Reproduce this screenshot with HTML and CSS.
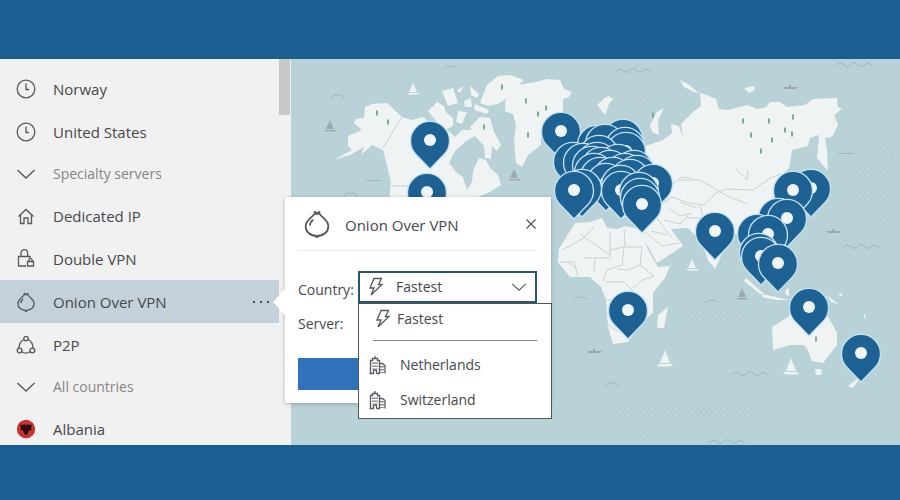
FILE: index.html
```
<!DOCTYPE html>
<html lang="en">
<head>
  <meta charset="UTF-8">
  <meta name="viewport" content="width=device-width, initial-scale=1.0">
  <title>Onion Over VPN</title>
  <link rel="stylesheet" href="styles.css">
</head>
<body>
  <!-- Shared icons -->
  <svg class="sprite" aria-hidden="true">
    <symbol id="i-clock" viewBox="0 0 20 20"><circle cx="10" cy="10" r="8.800"/><path d="M10 4.500V10.500H13"/></symbol>
    <symbol id="i-chevron" viewBox="0 0 20 20"><path d="M1.500 6L10 14L18.500 6"/></symbol>
    <symbol id="i-home" viewBox="0 0 20 20"><path d="M2.500 10.500L10 3.500L17.500 10.500M4.500 9V17.500H8V12H12V17.500H15.500V9"/></symbol>
    <symbol id="i-locks" viewBox="0 0 20 20"><path d="M10 17H2.500V7.500H14V10M5 7.500V4A3.300 3.300 0 0 1 11.600 4V7.500M11.500 12.500H17.500V17H11.500ZM12.800 12.500V11.300A1.700 1.700 0 0 1 16.200 11.300V12.500"/></symbol>
    <symbol id="i-onion" viewBox="0 0 26 26"><path d="M10 1.500L13 3L16 1.500M10.500 3.500H15.500M10.500 3.500C9 7 2.500 9 2.500 15C2.500 20.500 7 24 13 24C19 24 23.500 20.500 23.500 15C23.500 9 17 7 15.500 3.500M6.500 14.500C6.500 12 8 10 9.500 9M11.500 25H14.500"/></symbol>
    <symbol id="i-p2p" viewBox="0 0 20 20"><circle cx="10" cy="3.500" r="2.200"/><circle cx="3.600" cy="15.500" r="2.400"/><circle cx="16.400" cy="15.500" r="2.400"/><path d="M8 4.500C5 6 3 9 3 13M12 4.500C15 6 17 9 17 13M5.800 16.800C8.500 18.500 11.500 18.500 14.200 16.800"/></symbol>
    <symbol id="i-bolt" viewBox="0 0 16 20"><path d="M6 1.500H13.500L10.500 7.500H14L3 18L6 11H2Z"/></symbol>
    <symbol id="i-city" viewBox="0 0 18 20"><path d="M1.500 18.500V5.500H3.500V3.500H8.500V5.500H10.500V18.500M6 3.500V1M0.500 18.500H5M7.500 18.500H11M10.500 8.500H13.500L16 10.500V18.500M4.500 18.500V15H7.500V18.500"/><path stroke-dasharray="1.500 1.500" d="M4 7.500V14M6 7.500V14M8 7.500V14M12 11V18M14 11V18"/></symbol>
    <symbol id="i-close" viewBox="0 0 12 12"><path d="M1.500 1.500L10.500 10.500M10.500 1.500L1.500 10.500"/></symbol>
  </svg>

  <main class="app">
    <nav class="sidebar">
      <ul class="servers">
        <li><a href="#" class="row"><svg class="icon"><use href="#i-clock"/></svg>Norway</a></li>
        <li><a href="#" class="row"><svg class="icon"><use href="#i-clock"/></svg>United States</a></li>
        <li><button type="button" class="row group"><svg class="icon"><use href="#i-chevron"/></svg>Specialty servers</button></li>
        <li><a href="#" class="row"><svg class="icon"><use href="#i-home"/></svg>Dedicated IP</a></li>
        <li><a href="#" class="row"><svg class="icon"><use href="#i-locks"/></svg>Double VPN</a></li>
        <li><a href="#" class="row active"><svg class="icon"><use href="#i-onion"/></svg>Onion Over VPN<span class="dots"><i></i><i></i><i></i></span></a></li>
        <li><a href="#" class="row"><svg class="icon"><use href="#i-p2p"/></svg>P2P</a></li>
        <li><button type="button" class="row group"><svg class="icon"><use href="#i-chevron"/></svg>All countries</button></li>
        <li><a href="#" class="row">
          <svg class="icon flag" viewBox="0 0 20 20"><circle cx="10" cy="10" r="9.200" fill="#c5352f"/><path fill="#2b0c0e" d="M10 7L8.500 5L7 6L4 5.500L5 9L4.500 11L7 11.500L8 14L10 16.500L12 14L13 11.500L15.500 11L15 9L16 5.500L13 6L11.500 5Z"/></svg>Albania</a></li>
      </ul>
      <div class="scrollbar"><div class="thumb"></div></div>
    </nav>

    <div class="map">
      <svg viewBox="291 59 609 386" preserveAspectRatio="xMinYMin slice" role="img" aria-label="Server map">
        <defs>
          <pattern id="stipple" width="6" height="6" patternUnits="userSpaceOnUse">
            <path d="M1 1h1.500M4 4h1.500" stroke="#a5c1c8" stroke-width="1"/>
          </pattern>
          <g id="pin">
            <path class="pin-body" d="M0 29L-14 14.500A19.500 19.500 0 1 1 14 14.500Z"/>
            <circle class="pin-hole" r="6"/>
          </g>
          <g id="tree"><path d="M0 -2.500V2.500" stroke="#7fa89c" stroke-width="2"/></g>
          <path id="wave" d="M0 2Q4 -3 8 1Q12 4 15 0Q19 -3 22 1Q26 4 29 0Q33 -2 36 2"/>
          <path id="gull" d="M0 3Q3 -2 6 1Q9 -2 13 3"/>
          <g id="sail"><path d="M6 -7L2 2H10ZM0 3H13L11 4.500H2Z"/></g>
          <g id="big-sail"><path d="M8 -9L3 4H13ZM0 5H16L14 7.500H2Z"/></g>
          <g id="ship"><path d="M0 0H15L13 2H2ZM6 -2H8V0H6Z"/></g>
        </defs>

        <g fill="url(#stipple)">
          <path d="M624 90L642 85L650 94L646 107L630 110Z"/>
          <path d="M872 145L888 135L895 160V250L888 255L875 225L838 200L855 170Z"/>
          <path d="M588 420L610 405L660 395L705 390L720 405L700 425L640 440Z"/>
          <path d="M700 410L735 395L768 392L758 415L725 430L700 426Z"/>
          <path d="M684 315L720 305L755 315L748 335L700 328Z"/>
          <path d="M552 360L573 368L570 388L552 390Z"/>
        </g>

        <!-- Land -->
        <g class="land">
          <path d="M365 107L372 104L387 103L402 117L412 120L423 117L430 123L450 132L455 137L462 130L472 130L477 135L466 141L455 151L449 163L456 172L463 177L467 190L472 182L473 171L479 158L486 160L490 168L498 175L501 185L488 193L475 198L468 202H389L391 182L383 150L372 145L361 155L364 147L350 155L334 160L352 150L348 146V136L362 130L354 123L356 119L364 118Z"/>
          <path d="M442 91L453 88L458 103L448 106ZM428 111L437 102L444 106L446 112L453 118L453 126L445 130L436 121ZM458 111L467 112L462 124L456 122ZM470 86L479 94L477 98L471 95ZM457 90L464 86L460 93ZM464 101L471 98L472 107L465 107ZM475 104L489 110L487 114L474 110Z"/>
          <path d="M480 103L487 85L498 76L510 75L524 80L512 91L506 99L498 104L488 106Z"/>
          <path d="M470 127L480 117L490 118L494 132L501 145L497 151L492 146L491 159L485 158L484 146L476 137Z"/>
          <path d="M505 102L509 92L517 85L536 82L547 79L560 80L564 89L572 92L569 97L563 99V112L550 131L541 138V145L528 155L522 167L516 163L514 142L516 125L513 114L505 111Z"/>
          <path d="M597 105L605 98L613 98L609 104L605 115ZM604 98L609 96L614 100ZM680 80L688 84L699 93L694 92L684 87ZM744 88L754 86L755 90L749 93ZM650 125L657 112L664 108L658 120L659 135L652 132Z"/>
          <path d="M557 160L590 170L605 155L625 135L640 138L643 147L663 140L672 133L671 124L679 126L683 138L681 124L693 112L701 106L700 93L709 96L716 99L719 109L728 110L747 105L757 109L766 107L770 102L780 102L787 107L805 105L813 99L837 98L838 107L842 109L834 115L838 125L832 137L825 138L827 151L828 171L817 158L819 135L810 138L808 146L792 150L789 168L784 173L793 205L775 240L774 270L767 248L759 257L751 238L740 232L725 240L721 256L715 269L708 260L701 241L688 228L671 229L683 246L657 263L650 250L638 231L641 221L650 216L630 215L623 218L605 206L594 194L580 208H565L566 180Z"/>
          <path d="M575 223L590 222L602 218L607 228L617 229L625 226L640 229L647 248L658 267L670 266L665 278L653 293V313L642 322L628 342L613 344L608 327L606 300L601 287L590 277L570 277L558 262L559 249L568 234Z"/>
          <path d="M657 328L658 315L668 307L664 328ZM746 278L764 294L760 294L744 281ZM762 294L790 300H776L762 297ZM786 290L789 288V296L785 294ZM827 295L838 304L831 302ZM864 313L866 319L864 318ZM838 295L842 293V296Z"/>
          <path d="M772 327L788 317L796 307L806 311L815 318L823 307L829 318L837 333L837 345L823 363L812 361L808 350L804 345L790 345L773 350Z"/>
          <path d="M815 369H822L821 375H816ZM866 370L853 388L848 386L857 379Z"/>
        </g>

        <!-- Borders and rivers -->
        <g class="borders">
          <path d="M402 117L383 148M392 186H430"/>
          <path d="M562 250L584 238L594 226M580 234L610 255M584 258H610V232M594 272L595 258M610 250L624 247H642M624 229L625 247M624 248L622 265L607 270L603 281M642 247L640 265L628 270L617 269M640 265L654 276L642 280L633 288M606 282H624L636 294M605 300H618M602 320L618 332M560 262H574L578 276M568 262L576 268M645 232L662 246L680 243M655 216L672 238M664 220L680 224L690 213M651 231L667 235"/>
          <path d="M660 205L672 197L690 203L704 205L716 193L725 189L753 190L770 178L781 174M679 180L700 180L717 190L727 196L748 204M687 218L703 218L700 205M680 202L697 208M736 169L747 180L748 170M670 186L682 177L692 178M668 208L680 216L692 213"/>
        </g>

        <g class="sea-lines">
          <use href="#wave" x="615" y="70"/><use href="#wave" x="836" y="64"/>
          <use href="#wave" x="843" y="246"/><use href="#wave" x="732" y="373"/>
          <use href="#wave" x="709" y="441"/>
          <use href="#gull" x="444" y="66"/><use href="#gull" x="331" y="95"/>
          <use href="#gull" x="344" y="193"/><use href="#gull" x="574" y="297"/>
          <use href="#gull" x="606" y="383"/><use href="#gull" x="705" y="300"/>
          <path d="M838 153.500H854M366 180.500H382"/>
        </g>
        <g fill="#eef4f4">
          <use href="#sail" x="407" y="90"/><use href="#sail" x="686" y="266"/>
          <use href="#big-sail" x="657" y="359"/><use href="#big-sail" x="783" y="367"/>
        </g>
        <g fill="#9da9aa">
          <use href="#sail" x="324" y="127"/><use href="#sail" x="508" y="176"/>
          <use href="#sail" x="736" y="295"/><use href="#ship" x="783" y="87"/>
          <use href="#ship" x="826" y="231"/><use href="#ship" x="587" y="351"/>
        </g>
        <g>
          <use href="#tree" x="377" y="113"/><use href="#tree" x="388" y="122"/><use href="#tree" x="484" y="127"/>
          <use href="#tree" x="502" y="87"/><use href="#tree" x="526" y="101"/><use href="#tree" x="538" y="114"/>
          <use href="#tree" x="546" y="108"/><use href="#tree" x="528" y="135"/><use href="#tree" x="653" y="115"/>
          <use href="#tree" x="743" y="121"/><use href="#tree" x="751" y="135"/><use href="#tree" x="761" y="151"/>
          <use href="#tree" x="769" y="121"/><use href="#tree" x="772" y="140"/><use href="#tree" x="785" y="130"/>
          <use href="#tree" x="792" y="134"/><use href="#tree" x="793" y="117"/><use href="#tree" x="816" y="339"/>
        </g>

        <!-- Server pins, back to front -->
        <g>
          <use href="#pin" x="430" y="140"/><use href="#pin" x="427" y="192"/>
          <use href="#pin" x="561" y="131"/>
          <use href="#pin" x="623" y="138"/><use href="#pin" x="597" y="144"/>
          <use href="#pin" x="605" y="143"/><use href="#pin" x="625" y="146"/>
          <use href="#pin" x="626" y="151"/><use href="#pin" x="599" y="154"/>
          <use href="#pin" x="573" y="161"/><use href="#pin" x="583" y="162"/>
          <use href="#pin" x="597" y="161"/><use href="#pin" x="618" y="163"/>
          <use href="#pin" x="592" y="165"/><use href="#pin" x="601" y="166"/>
          <use href="#pin" x="634" y="169"/><use href="#pin" x="610" y="169"/>
          <use href="#pin" x="594" y="172"/><use href="#pin" x="625" y="172"/>
          <use href="#pin" x="637" y="174"/><use href="#pin" x="600" y="176"/>
          <use href="#pin" x="613" y="176"/><use href="#pin" x="630" y="178"/>
          <use href="#pin" x="606" y="182"/><use href="#pin" x="621" y="184"/>
          <use href="#pin" x="653" y="183"/><use href="#pin" x="582" y="188"/>
          <use href="#pin" x="574" y="190"/><use href="#pin" x="621" y="190"/>
          <use href="#pin" x="639" y="191"/><use href="#pin" x="640" y="197"/>
          <use href="#pin" x="642" y="204"/>
          <use href="#pin" x="715" y="231"/><use href="#pin" x="811" y="188"/>
          <use href="#pin" x="793" y="190"/><use href="#pin" x="778" y="217"/>
          <use href="#pin" x="787" y="218"/><use href="#pin" x="757" y="233"/>
          <use href="#pin" x="768" y="234"/><use href="#pin" x="759" y="252"/>
          <use href="#pin" x="761" y="256"/><use href="#pin" x="778" y="263"/>
          <use href="#pin" x="809" y="307"/><use href="#pin" x="861" y="353"/>
          <use href="#pin" x="628" y="310"/>
        </g>
      </svg>
    </div>

    <section class="popup">
      <header class="popup-head">
        <svg class="popup-icon"><use href="#i-onion"/></svg>
        <h1>Onion Over VPN</h1>
        <button type="button" class="close" aria-label="Close"><svg><use href="#i-close"/></svg></button>
      </header>
      <form class="popup-form">
        <div class="field">
          <label for="country">Country:</label>
          <div class="select-box">
            <svg class="bolt"><use href="#i-bolt"/></svg>
            <select id="country">
              <option>Fastest</option>
              <option>Netherlands</option>
              <option>Switzerland</option>
            </select>
            <svg class="arrow"><use href="#i-chevron"/></svg>
            <ul class="menu">
              <li class="fastest"><svg class="bolt"><use href="#i-bolt"/></svg>Fastest</li>
              <li class="place"><svg class="city"><use href="#i-city"/></svg>Netherlands</li>
              <li class="place"><svg class="city"><use href="#i-city"/></svg>Switzerland</li>
            </ul>
          </div>
        </div>
        <div class="field">
          <label for="server">Server:</label>
          <div class="select-box"><select id="server"></select></div>
        </div>
        <button type="button" class="connect" aria-label="Connect"></button>
      </form>
    </section>
  </main>
</body>
</html>
```
FILE: styles.css
```
* {
  box-sizing: border-box;
}
body {
  margin: 0;
  padding: 59px 0 55px;
  height: 100vh;
  display: flex;
  background-color: #1b5e92;
  color: #45484c;
  font-family: "Open Sans", "Noto Sans", sans-serif;
  font-size: 14px;
  line-height: 20px;
}
ul {
  list-style: none;
  margin: 0;
  padding: 0;
}
button,
select {
  font: inherit;
  color: inherit;
  border: none;
  background: none;
  padding: 0;
}
svg {
  display: block;
  fill: none;
  stroke: #55585c;
  stroke-width: 1.3;
}
.sprite {
  position: absolute;
  width: 0;
  height: 0;
}
.app {
  position: relative;
  flex: 1;
  display: flex;
}

/* Server list */
.sidebar {
  flex: 0 0 291px;
  display: flex;
  background: #f1f1f1;
}
.servers {
  flex: 1;
  padding-top: 8px;
  overflow: hidden;
}
.row {
  display: flex;
  align-items: center;
  gap: 17px;
  width: 100%;
  height: 43px;
  padding: 0 10px 0 16px;
  color: #45484c;
  font-size: 15px;
  text-decoration: none;
}
.row.group {
  height: 41px;
  color: #858585;
  font-size: 14px;
}
.row.active {
  background: #c4d1da;
}
.icon {
  width: 20px;
  height: 20px;
}
.flag {
  stroke: none;
}
.row.active .icon {
  stroke-width: 1.7;
}
.dots {
  display: flex;
  gap: 5px;
  margin-left: auto;
}
.dots i {
  width: 2px;
  height: 2px;
  background: #45484c;
}
.scrollbar {
  width: 12px;
  padding-right: 1px;
}
.thumb {
  height: 56px;
  background: #c8c8c8;
}

/* Map */
.map {
  position: relative;
  flex: 1;
  overflow: hidden;
  background: #b9d2d8;
}
.map > svg {
  position: absolute;
  width: 100%;
  height: 100%;
  stroke: none;
}
.land {
  fill: #f0f3f3;
}
.borders {
  stroke: #c6d3d6;
  stroke-width: 1;
}
.sea-lines {
  stroke: #9ab8c0;
  stroke-width: 1;
}
.pin-body {
  fill: #1d6293;
  stroke: #c3e2f3;
  stroke-width: 1.3;
}
.pin-hole {
  fill: #f0f5f8;
}

/* Onion popup */
.popup {
  position: absolute;
  left: 285px;
  top: 138px;
  width: 266px;
  padding: 0 14px 13px 13px;
  background: #fff;
  box-shadow: 0 1px 4px rgba(0, 0, 0, 0.25);
}
.popup::before {
  content: "";
  position: absolute;
  left: -12px;
  top: 92px;
  width: 12px;
  height: 26px;
  background: #fff;
  clip-path: polygon(100% 0, 0 50%, 100% 100%);
}
.popup-head {
  display: flex;
  align-items: center;
  height: 54px;
  padding-left: 5px;
  border-bottom: 1px solid #e8e8e8;
}
.popup-icon {
  width: 28px;
  height: 28px;
  stroke-width: 1.7;
}
.popup h1 {
  margin: 3px 0 0 14px;
  font-size: 15px;
  font-weight: normal;
}
.close {
  margin-left: auto;
}
.close svg {
  width: 12px;
  height: 12px;
}
.popup-form {
  padding-top: 20px;
}
.field {
  display: flex;
  align-items: center;
  justify-content: space-between;
  height: 32px;
  margin-bottom: 2px;
}
.field label {
  padding-top: 6px;
}
.select-box {
  position: relative;
  width: 179px;
}
.select-box select {
  display: block;
  width: 100%;
  height: 32px;
  padding: 0 36px;
  border: 1px solid #777;
  border-radius: 0;
  background: #fff;
  appearance: none;
}
#country {
  border: 2px solid #28566e;
}
.bolt {
  width: 16px;
  height: 20px;
}
.select-box > .bolt {
  position: absolute;
  left: 10px;
  top: 6px;
}
.arrow {
  position: absolute;
  right: 10px;
  top: 7px;
  width: 16px;
  height: 18px;
}
.menu {
  position: absolute;
  z-index: 1;
  left: 0;
  top: 32px;
  width: 194px;
  padding-bottom: 1px;
  border: 1px solid #50555a;
  background: #fff;
}
.menu li {
  display: flex;
  align-items: center;
}
.menu .fastest {
  gap: 6px;
  height: 37px;
  margin: 0 14px 6px;
  padding: 0 2px 6px;
  border-bottom: 1px solid #888;
}
.menu .place {
  gap: 13px;
  height: 35px;
  padding-left: 10px;
}
.city {
  width: 18px;
  height: 20px;
}
.connect {
  display: block;
  width: 100%;
  height: 32px;
  margin-top: 21px;
  background: #3073bb;
}
```
